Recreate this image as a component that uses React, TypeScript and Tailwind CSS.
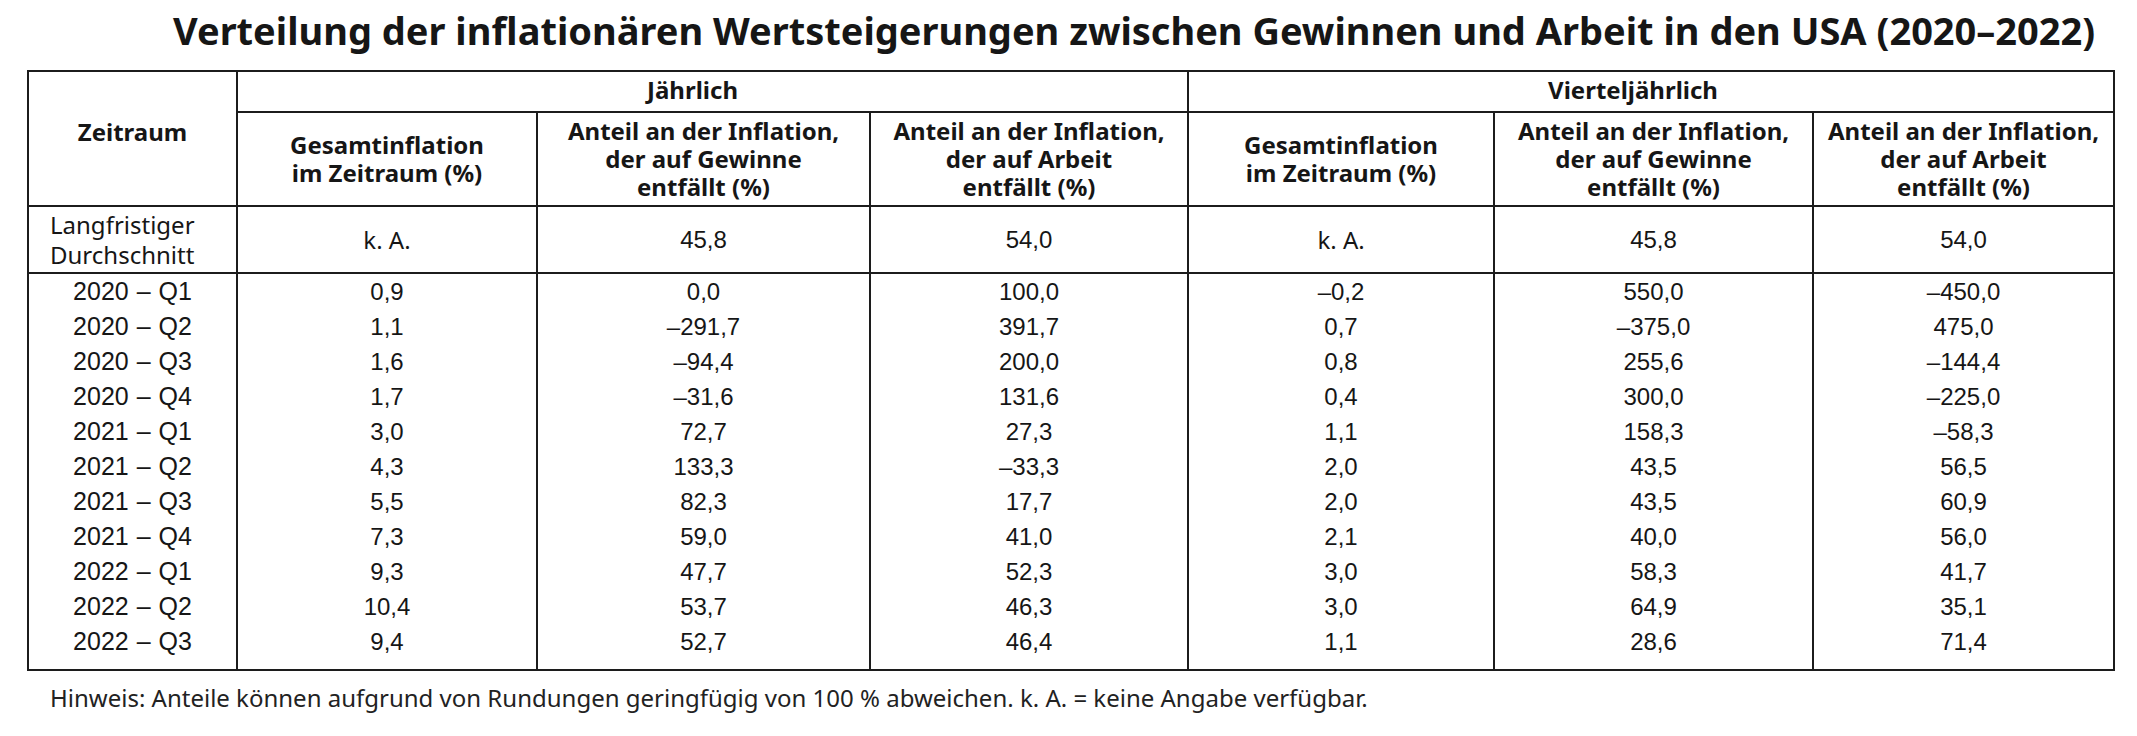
import React from 'react';

type Row = {
  period: string;
  vals: string[];
};

const rows: Row[] = [
  { period: '2020 – Q1', vals: ['0,9', '0,0', '100,0', '–0,2', '550,0', '–450,0'] },
  { period: '2020 – Q2', vals: ['1,1', '–291,7', '391,7', '0,7', '–375,0', '475,0'] },
  { period: '2020 – Q3', vals: ['1,6', '–94,4', '200,0', '0,8', '255,6', '–144,4'] },
  { period: '2020 – Q4', vals: ['1,7', '–31,6', '131,6', '0,4', '300,0', '–225,0'] },
  { period: '2021 – Q1', vals: ['3,0', '72,7', '27,3', '1,1', '158,3', '–58,3'] },
  { period: '2021 – Q2', vals: ['4,3', '133,3', '–33,3', '2,0', '43,5', '56,5'] },
  { period: '2021 – Q3', vals: ['5,5', '82,3', '17,7', '2,0', '43,5', '60,9'] },
  { period: '2021 – Q4', vals: ['7,3', '59,0', '41,0', '2,1', '40,0', '56,0'] },
  { period: '2022 – Q1', vals: ['9,3', '47,7', '52,3', '3,0', '58,3', '41,7'] },
  { period: '2022 – Q2', vals: ['10,4', '53,7', '46,3', '3,0', '64,9', '35,1'] },
  { period: '2022 – Q3', vals: ['9,4', '52,7', '46,4', '1,1', '28,6', '71,4'] },
];

const avg = ['k. A.', '45,8', '54,0', 'k. A.', '45,8', '54,0'];

const sub = [
  ['Gesamtinflation', 'im Zeitraum (%)'],
  ['Anteil an der Inflation,', 'der auf Gewinne', 'entfällt (%)'],
  ['Anteil an der Inflation,', 'der auf Arbeit', 'entfällt (%)'],
];

const humanist = "font-['Noto_Sans',_'Open_Sans',_sans-serif]";
const arial = "font-['Liberation_Sans',_Arial,_sans-serif]";

const App: React.FC = () => {
  return (
    <div className="w-[2137px] h-[736px] bg-white text-[#161616] overflow-hidden">
      <h1 className="h-[70px] pl-[173px] pt-[8px] text-[38px] leading-[44px] font-bold whitespace-nowrap font-['Noto_Sans',_sans-serif]">
        Verteilung der inflationären Wertsteigerungen zwischen Gewinnen und Arbeit in den USA (2020–2022)
      </h1>

      <table className="ml-[27px] w-[2088px] table-fixed border-collapse border-2 border-[#1c1c1c]">
        <colgroup>
          <col className="w-[209px]" />
          <col className="w-[300px]" />
          <col className="w-[333px]" />
          <col className="w-[318px]" />
          <col className="w-[306px]" />
          <col className="w-[319px]" />
          <col className="w-[301px]" />
        </colgroup>
        <thead className={`${humanist} font-bold text-[24px]`}>
          <tr className="h-[41px]">
            <th rowSpan={2} className="border-2 border-[#1c1c1c] pb-[14px] font-bold">
              Zeitraum
            </th>
            <th colSpan={3} className="border-2 border-[#1c1c1c] pr-[40px] pb-[3px] leading-[26px] font-bold">
              Jährlich
            </th>
            <th colSpan={3} className="border-2 border-[#1c1c1c] pr-[36px] pb-[3px] leading-[26px] font-bold">
              Vierteljährlich
            </th>
          </tr>
          <tr className="h-[94px]">
            {[0, 1].map((g) =>
              sub.map((lines, i) => (
                <th key={`${g}-${i}`} className="border-2 border-[#1c1c1c] leading-[28px] font-bold">
                  {lines.map((l, li) => (
                    <React.Fragment key={l}>
                      {li > 0 && <br />}
                      {l}
                    </React.Fragment>
                  ))}
                </th>
              ))
            )}
          </tr>
        </thead>
        <tbody className={`${arial} text-[24px]`}>
          <tr className="h-[67px] border-b-2 border-[#1c1c1c]">
            <td className={`${humanist} border-x-2 border-[#1c1c1c] pl-[21px] text-left text-[24px] leading-[30px]`}>
              Langfristiger
              <br />
              Durchschnitt
            </td>
            {avg.map((v, i) => (
              <td
                key={i}
                className={`${v === 'k. A.' ? humanist : ''} border-x-2 border-[#1c1c1c] text-center`}
              >
                {v}
              </td>
            ))}
          </tr>
          {rows.map((r, ri) => {
            const last = ri === rows.length - 1;
            const cell = `border-x-2 border-[#1c1c1c] text-center p-0 leading-[35px] ${last ? 'pb-[10px]' : ''}`;
            return (
              <tr key={r.period}>
                <td className={`${cell} text-[25px] [word-spacing:1px]`}>{r.period}</td>
                {r.vals.map((v, i) => (
                  <td key={i} className={cell}>
                    {v}
                  </td>
                ))}
              </tr>
            );
          })}
        </tbody>
      </table>

      <p className={`${humanist} mt-[12px] pl-[50px] text-[24px] leading-[30px] text-[#222]`}>
        Hinweis: Anteile können aufgrund von Rundungen geringfügig von 100 % abweichen. k. A. = keine Angabe verfügbar.
      </p>
    </div>
  );
};

export default App;
